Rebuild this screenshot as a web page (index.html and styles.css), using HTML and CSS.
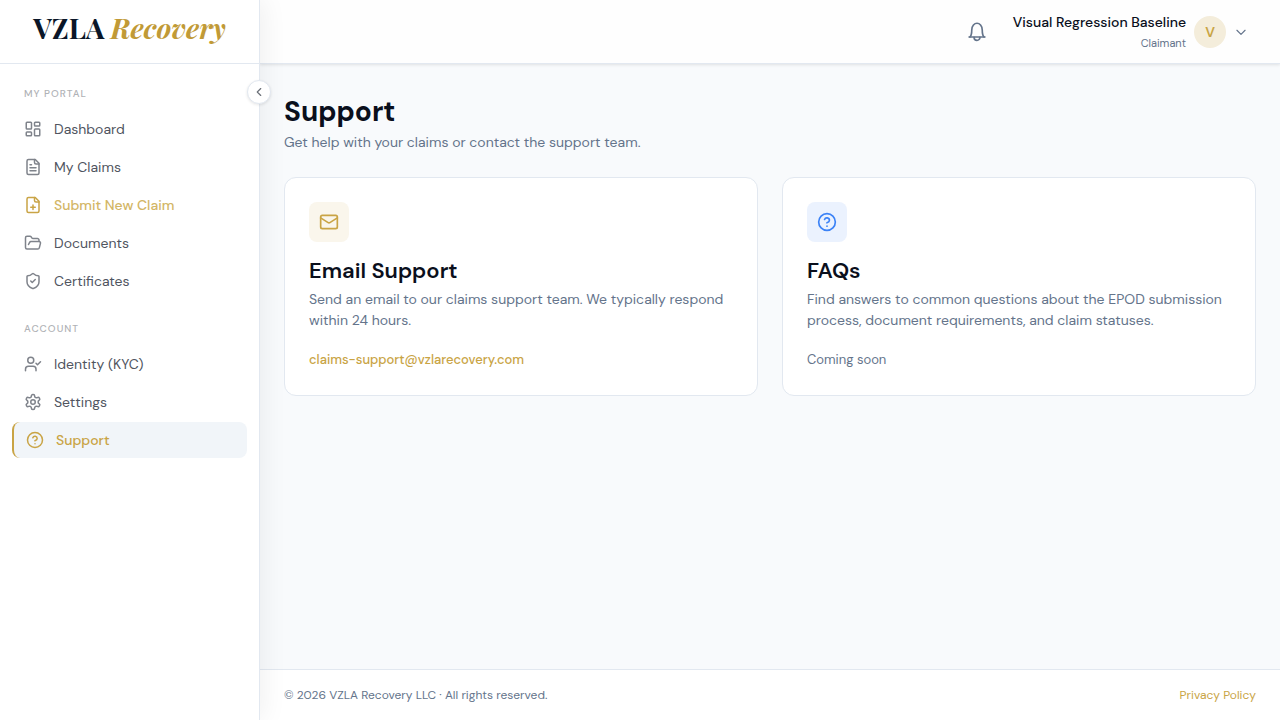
FILE: index.html
```html
<!DOCTYPE html>
<html lang="en">
<head>
  <meta charset="UTF-8">
  <meta name="viewport" content="width=device-width, initial-scale=1">
  <title>Support - VZLA Recovery</title>
  <link rel="stylesheet" href="styles.css">
</head>
<body>
  <div class="app">
    <aside class="sidebar">
      <a class="logo" href="#">VZLA <em>Recovery</em></a>
      <button class="collapse-btn" aria-label="Collapse sidebar">
        <svg class="icon" width="14" height="14" viewBox="0 0 24 24"><path d="m15 18-6-6 6-6"/></svg>
      </button>
      <nav class="nav">
        <div class="nav-group">
          <h2 class="nav-label">My Portal</h2>
          <a class="nav-item" href="#">
            <svg class="icon" width="18" height="18" viewBox="0 0 24 24"><rect width="7" height="9" x="3" y="3" rx="1"/><rect width="7" height="5" x="14" y="3" rx="1"/><rect width="7" height="9" x="14" y="12" rx="1"/><rect width="7" height="5" x="3" y="16" rx="1"/></svg>
            <span>Dashboard</span>
          </a>
          <a class="nav-item" href="#">
            <svg class="icon" width="18" height="18" viewBox="0 0 24 24"><path d="M15 2H6a2 2 0 0 0-2 2v16a2 2 0 0 0 2 2h12a2 2 0 0 0 2-2V7Z"/><path d="M14 2v4a2 2 0 0 0 2 2h4"/><path d="M10 9H8"/><path d="M16 13H8"/><path d="M16 17H8"/></svg>
            <span>My Claims</span>
          </a>
          <a class="nav-item highlight" href="#">
            <svg class="icon" width="18" height="18" viewBox="0 0 24 24"><path d="M15 2H6a2 2 0 0 0-2 2v16a2 2 0 0 0 2 2h12a2 2 0 0 0 2-2V7Z"/><path d="M14 2v4a2 2 0 0 0 2 2h4"/><path d="M9 15h6"/><path d="M12 18v-6"/></svg>
            <span>Submit New Claim</span>
          </a>
          <a class="nav-item" href="#">
            <svg class="icon" width="18" height="18" viewBox="0 0 24 24"><path d="m6 14 1.5-2.9A2 2 0 0 1 9.24 10H20a2 2 0 0 1 1.94 2.5l-1.54 6a2 2 0 0 1-1.95 1.5H4a2 2 0 0 1-2-2V5a2 2 0 0 1 2-2h3.9a2 2 0 0 1 1.69.9l.81 1.2a2 2 0 0 0 1.67.9H18a2 2 0 0 1 2 2v2"/></svg>
            <span>Documents</span>
          </a>
          <a class="nav-item" href="#">
            <svg class="icon" width="18" height="18" viewBox="0 0 24 24"><path d="M20 13c0 5-3.5 7.5-7.66 8.95a1 1 0 0 1-.67-.01C7.5 20.5 4 18 4 13V6a1 1 0 0 1 1-1c2 0 4.5-1.2 6.24-2.72a1.17 1.17 0 0 1 1.52 0C14.51 3.81 17 5 19 5a1 1 0 0 1 1 1z"/><path d="m9 12 2 2 4-4"/></svg>
            <span>Certificates</span>
          </a>
        </div>
        <div class="nav-group">
          <h2 class="nav-label">Account</h2>
          <a class="nav-item" href="#">
            <svg class="icon" width="18" height="18" viewBox="0 0 24 24"><path d="m16 11 2 2 4-4"/><path d="M16 21v-2a4 4 0 0 0-4-4H6a4 4 0 0 0-4 4v2"/><circle cx="9" cy="7" r="4"/></svg>
            <span>Identity (KYC)</span>
          </a>
          <a class="nav-item" href="#">
            <svg class="icon" width="18" height="18" viewBox="0 0 24 24"><path d="M12.22 2h-.44a2 2 0 0 0-2 2v.18a2 2 0 0 1-1 1.73l-.43.25a2 2 0 0 1-2 0l-.15-.08a2 2 0 0 0-2.73.73l-.22.38a2 2 0 0 0 .73 2.73l.15.1a2 2 0 0 1 1 1.72v.51a2 2 0 0 1-1 1.74l-.15.09a2 2 0 0 0-.73 2.73l.22.38a2 2 0 0 0 2.73.73l.15-.08a2 2 0 0 1 2 0l.43.25a2 2 0 0 1 1 1.73V20a2 2 0 0 0 2 2h.44a2 2 0 0 0 2-2v-.18a2 2 0 0 1 1-1.73l.43-.25a2 2 0 0 1 2 0l.15.08a2 2 0 0 0 2.73-.73l.22-.39a2 2 0 0 0-.73-2.73l-.15-.08a2 2 0 0 1-1-1.74v-.5a2 2 0 0 1 1-1.74l.15-.09a2 2 0 0 0 .73-2.73l-.22-.38a2 2 0 0 0-2.73-.73l-.15.08a2 2 0 0 1-2 0l-.43-.25a2 2 0 0 1-1-1.73V4a2 2 0 0 0-2-2z"/><circle cx="12" cy="12" r="3"/></svg>
            <span>Settings</span>
          </a>
          <a class="nav-item active" href="#" aria-current="page">
            <svg class="icon" width="18" height="18" viewBox="0 0 24 24"><circle cx="12" cy="12" r="10"/><path d="M9.09 9a3 3 0 0 1 5.83 1c0 2-3 3-3 3"/><path d="M12 17h.01"/></svg>
            <span>Support</span>
          </a>
        </div>
      </nav>
    </aside>
    <div class="page">
      <header class="topbar">
        <button class="bell-btn" aria-label="Notifications">
          <svg class="icon" width="20" height="20" viewBox="0 0 24 24"><path d="M2.500 18h19"/><path d="M3.500 18C5 16.500 5.700 14.500 5.700 9.500c0-5 3.300-8 6.300-8s6.300 3 6.300 8c0 5 .7 7 2.200 8.500"/><path d="M8.500 18.500a3.500 3.500 0 0 0 7 0"/></svg>
        </button>
        <button class="user-btn">
          <span class="user-info">
            <span class="user-name">Visual Regression Baseline</span>
            <span class="user-role">Claimant</span>
          </span>
          <span class="avatar">V</span>
          <svg class="icon" width="14" height="14" viewBox="0 0 24 24"><path d="m5 9 7 7 7-7"/></svg>
        </button>
      </header>
      <main class="content">
        <h1>Support</h1>
        <p class="subtitle">Get help with your claims or contact the support team.</p>
        <div class="cards">
          <section class="card">
            <div class="card-icon gold">
              <svg class="icon" width="20" height="20" viewBox="0 0 24 24"><rect width="20" height="16" x="2" y="4" rx="2"/><path d="m22 7-8.97 5.7a1.94 1.94 0 0 1-2.06 0L2 7"/></svg>
            </div>
            <h3>Email Support</h3>
            <p>Send an email to our claims support team. We typically respond within 24 hours.</p>
            <a class="card-action" href="mailto:claims-support@vzlarecovery.com">claims-support@vzlarecovery.com</a>
          </section>
          <section class="card">
            <div class="card-icon blue">
              <svg class="icon" width="20" height="20" viewBox="0 0 24 24"><circle cx="12" cy="12" r="10"/><path d="M9.09 9a3 3 0 0 1 5.83 1c0 2-3 3-3 3"/><path d="M12 17h.01"/></svg>
            </div>
            <h3>FAQs</h3>
            <p>Find answers to common questions about the EPOD submission process, document requirements, and claim statuses.</p>
            <span class="card-action muted">Coming soon</span>
          </section>
        </div>
      </main>
      <footer class="footer">
        <span>© 2026 VZLA Recovery LLC · All rights reserved.</span>
        <a href="#">Privacy Policy</a>
      </footer>
    </div>
  </div>
</body>
</html>
```
FILE: styles.css
```css
* {
  box-sizing: border-box;
}

body {
  margin: 0;
  font-family: "DM Sans", Inter, sans-serif;
  font-size: 14px;
  line-height: 21px;
  color: #0a0f1c;
  background: #f8fafc;
}

h1, h2, h3, p {
  margin: 0;
}

a {
  color: #c9a445;
  text-decoration: none;
}

button {
  padding: 0;
  border: none;
  background: none;
  font: inherit;
  color: inherit;
  cursor: pointer;
}

.icon {
  flex-shrink: 0;
  fill: none;
  stroke: currentColor;
  stroke-width: 2;
  stroke-linecap: round;
  stroke-linejoin: round;
}

.app {
  display: flex;
  min-height: 100vh;
}

/* Sidebar */
.sidebar {
  position: relative;
  z-index: 2;
  flex: 0 0 260px;
  background: white;
  border-right: 1px solid #e2e8f0;
  box-shadow: 4px 0 24px rgba(0, 0, 0, 0.06);
}

.logo {
  display: flex;
  justify-content: center;
  gap: 6px;
  height: 64px;
  padding-top: 10px;
  border-bottom: 1px solid #e2e8f0;
  font-family: "Playfair Display", "Liberation Serif", serif;
  font-size: 28px;
  font-weight: 700;
  line-height: 36px;
  color: #0a1628;
}

.logo em {
  color: #c19a36;
}

.collapse-btn {
  position: absolute;
  top: 80px;
  right: -12px;
  display: flex;
  align-items: center;
  justify-content: center;
  width: 24px;
  height: 24px;
  border: 1px solid #e2e8f0;
  border-radius: 50%;
  background: white;
  color: #6b7078;
  box-shadow: 0 1px 3px rgba(0, 0, 0, 0.1);
}

.nav {
  display: flex;
  flex-direction: column;
  gap: 16px;
  padding: 16px 12px;
}

.nav-group {
  display: flex;
  flex-direction: column;
  gap: 2px;
}

.nav-label {
  padding: 6px 12px 7px;
  font-size: 10px;
  font-weight: 500;
  line-height: 16px;
  letter-spacing: 1px;
  text-transform: uppercase;
  color: #b0b2b6;
}

.nav-item {
  display: flex;
  align-items: center;
  gap: 12px;
  height: 36px;
  padding: 0 12px;
  border-radius: 8px;
  color: #50555f;
}

.nav-item .icon {
  color: #7f838b;
}

.nav-item.highlight {
  font-weight: 500;
  color: #d3b666;
}

.nav-item.highlight .icon,
.nav-item.active .icon {
  color: #c9a445;
}

.nav-item.active {
  border-left: 2px solid #c9a445;
  background: #f1f5f9;
  font-weight: 500;
  color: #c9a445;
}

/* Right side */
.page {
  display: flex;
  flex: 1;
  flex-direction: column;
  min-width: 0;
}

.topbar {
  display: flex;
  align-items: center;
  justify-content: flex-end;
  gap: 8px;
  height: 64px;
  padding: 0 24px;
  border-bottom: 1px solid #e2e8f0;
  background: #fefefe;
  box-shadow: 0 1px 3px rgba(0, 0, 0, 0.1);
}

.bell-btn {
  display: flex;
  align-items: center;
  justify-content: center;
  width: 40px;
  height: 40px;
  color: #64748b;
}

.user-btn {
  display: flex;
  align-items: center;
  gap: 8px;
  padding: 0 8px;
  color: #64748b;
}

.user-info {
  display: flex;
  flex-direction: column;
  padding-top: 2px;
  text-align: right;
}

.user-name {
  font-weight: 500;
  color: #0a0f1c;
}

.user-role {
  font-size: 11px;
}

.avatar {
  width: 32px;
  height: 32px;
  border-radius: 50%;
  background: #f4eddb;
  font-weight: 600;
  line-height: 32px;
  color: #c9a445;
}

.content {
  flex: 1;
  padding: 30px 24px;
}

.content h1 {
  font-size: 28px;
  font-weight: 700;
  line-height: 36px;
}

.subtitle {
  margin: 2px 0 24px;
  color: #64748b;
}

.cards {
  display: grid;
  grid-template-columns: 1fr 1fr;
  gap: 24px;
}

.card {
  padding: 24px;
  border: 1px solid #e2e8f0;
  border-radius: 12px;
  background: white;
}

.card-icon {
  display: flex;
  align-items: center;
  justify-content: center;
  width: 40px;
  height: 40px;
  margin-bottom: 16px;
  border-radius: 8px;
}

.card-icon.gold {
  background: #faf6ec;
  color: #c9a445;
}

.card-icon.blue {
  background: #ebf2fe;
  color: #3b82f6;
}

.card h3 {
  margin-bottom: 6px;
  font-size: 22px;
  font-weight: 600;
  line-height: 25px;
}

.card p {
  margin-bottom: 18px;
  color: #64748b;
}

.card-action {
  display: block;
  font-size: 13px;
  font-weight: 500;
  line-height: 22px;
}

.card-action.muted {
  font-weight: 400;
  color: #64748b;
}

.footer {
  display: flex;
  justify-content: space-between;
  padding: 16px 24px;
  border-top: 1px solid #e2e8f0;
  background: white;
  font-size: 12px;
  line-height: 18px;
  color: #64748b;
}
```
